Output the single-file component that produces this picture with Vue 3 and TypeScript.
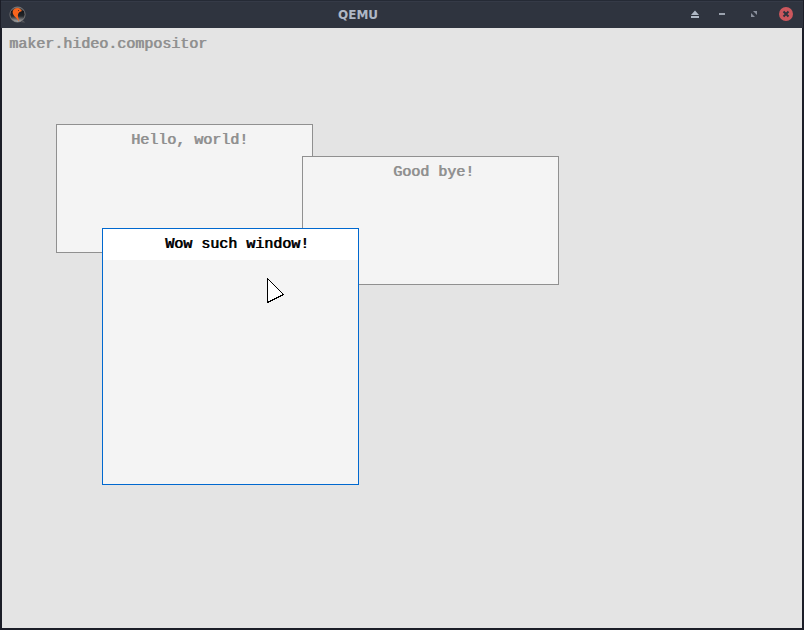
<script setup lang="ts">
interface DesktopWindow {
  id: number
  title: string
  x: number
  y: number
  width: number
  height: number
  active: boolean
}

const windows: DesktopWindow[] = [
  { id: 1, title: 'Hello, world!', x: 54, y: 96, width: 257, height: 129, active: false },
  { id: 2, title: 'Good bye!', x: 300, y: 128, width: 257, height: 129, active: false },
  { id: 3, title: 'Wow such window!', x: 100, y: 200, width: 257, height: 257, active: true },
]

// Titles are centred as if each glyph were 8px wide.
const titleInset = (w: DesktopWindow): number => Math.floor((w.width - w.title.length * 8) / 2) - 2
</script>

<template>
  <div class="frame">
    <header class="titlebar">
      <svg class="logo" width="18" height="18" viewBox="0 0 18 18">
        <defs>
          <linearGradient id="ball" x1="0" y1="0" x2="0" y2="1">
            <stop offset="0" stop-color="#77716f" />
            <stop offset=".3" stop-color="#17191e" />
            <stop offset=".6" stop-color="#24262a" />
            <stop offset="1" stop-color="#b4b4b4" />
          </linearGradient>
        </defs>
        <path d="M14 14.5 16.3 16.6 12 16.3Z" fill="#55575c" />
        <circle cx="8.5" cy="8.5" r="7.6" fill="url(#ball)" stroke="#8e8988" stroke-width=".7" />
        <path d="M3.8 5C5 1.8 9.4 1.2 11.4 3.2L13 5 10.6 6C9.2 7.4 8.6 8.6 9 10.6L10.2 15.5 6.8 11.6C4.4 9.4 3.1 7.2 3.8 5Z" fill="#f8641c" />
        <rect x="9" y="4" width="1" height="1" fill="#6b2d18" />
      </svg>
      <span class="caption">QEMU</span>
      <svg class="controls" width="120" height="28" viewBox="0 0 120 28">
        <path d="M7 15 11 10.5 15 15ZM7 16H15V18H7Z" fill="#afb8c5" />
        <path d="M35 13H41V15H35Z" fill="#9ba2ae" />
        <path d="M69 11H73V15ZM67 13V17H71Z" fill="#8a909d" />
        <circle cx="102" cy="14" r="7" fill="#cc575d" />
        <path d="M99.5 11.5 104.5 16.5M104.5 11.5 99.5 16.5" stroke="#2f343f" stroke-width="2" />
      </svg>
    </header>
    <main class="screen">
      <div class="name">maker.hideo.compositor</div>
      <section
        v-for="w in windows"
        :key="w.id"
        class="window"
        :class="{ active: w.active }"
        :style="{ left: w.x + 'px', top: w.y + 'px', width: w.width + 'px', height: w.height + 'px' }"
      >
        <div class="window-title" :style="{ paddingLeft: titleInset(w) + 'px' }">{{ w.title }}</div>
      </section>
      <svg class="pointer" width="18" height="26" viewBox="0 0 18 26" shape-rendering="crispEdges">
        <path d="M.5 .5V24.5L16.5 16.5Z" fill="#fff" stroke="#000" />
      </svg>
    </main>
  </div>
</template>

<style>
body {
  margin: 0;
  overflow: hidden;
}
</style>

<style scoped>
.frame {
  box-sizing: border-box;
  display: flex;
  flex-direction: column;
  width: 804px;
  height: 630px;
  background: #1b1d27;
}

.titlebar {
  box-sizing: border-box;
  display: grid;
  grid-template-columns: 120px 1fr 120px;
  align-items: center;
  height: 28px;
  margin: 0 1px;
  border-top: 1px solid #252a35;
  background: #2f343f;
  box-shadow: inset 0 1px #353a47;
}

.logo {
  margin-left: 8px;
}

.caption {
  padding-left: 217px;
  color: #afb8c6;
  font: bold 12px/16px "DejaVu Sans", sans-serif;
}

.controls {
  margin-left: 1px;
  margin-top: -1px;
}

.screen {
  position: relative;
  height: 600px;
  margin: 0 2px;
  overflow: hidden;
  background: #e4e4e4;
  color: #909090;
  font: 15px/16px "Liberation Mono", monospace;
  text-shadow: 0.7px 0 currentColor;
  white-space: pre;
}

.name {
  padding: 9px 7px;
}

.window {
  box-sizing: border-box;
  position: absolute;
  border: 1px solid #909090;
  background: #f4f4f4;
}

.window-title {
  box-sizing: border-box;
  height: 31px;
  padding-top: 8px;
}

.window.active {
  border-color: #0068cf;
  color: #000;
}

.active .window-title {
  background: #fff;
}

.pointer {
  position: absolute;
  left: 265px;
  top: 250px;
}
</style>
